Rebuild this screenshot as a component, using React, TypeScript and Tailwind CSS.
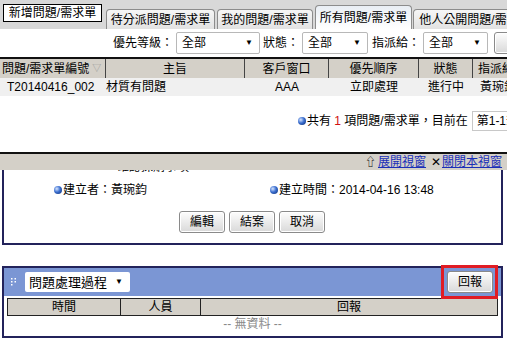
import React from "react";

const Bullet = () => (
  <span className="inline-block w-[8px] h-[8px] rounded-full bg-[radial-gradient(circle_at_35%_35%,#d8e6ff_0%,#3b6fd0_45%,#0b2a6e_100%)] mr-[1px]" />
);

const Select = ({ label, className }: { label: string; className: string }) => (
  <div className={"h-[22px] flex items-center justify-between bg-white border border-[#b8b8b8] rounded-[2px] pl-[5px] pr-[6px] " + className}>
    <span>{label}</span>
    <span className="text-[8px] leading-none">▼</span>
  </div>
);

const Btn = ({ label, className }: { label: string; className: string }) => (
  <div className={"h-[22px] flex items-center justify-center rounded-[3px] border border-[#8a8a8a] bg-linear-to-b from-[#fdfdfd] to-[#d9d9d9] shadow-[inset_0_0_0_1px_#fff] " + className}>
    {label}
  </div>
);

export default function App() {
  return (
    <div className="w-[507px] h-[339px] overflow-hidden bg-white text-[12px] leading-none text-black font-['Liberation_Sans','Noto_Sans_CJK_TC',sans-serif]">
      <div className="w-[640px]">
        {/* tabs */}
        <div className="h-[29px] bg-[#d8d8d8] flex items-end pl-[3px]">
          <div className="self-start mt-[4px] w-[99px] h-[18px] border border-black bg-white flex items-center justify-center">新增問題/需求單</div>
          <div className="ml-[4px] w-[109px] h-[20px] rounded-t-[4px] border border-b-0 border-[#8c8c8c] bg-linear-to-b from-[#f6f6f6] to-[#e2e2e2] flex items-center justify-center">待分派問題/需求單</div>
          <div className="ml-[2px] w-[96px] h-[20px] rounded-t-[4px] border border-b-0 border-[#8c8c8c] bg-linear-to-b from-[#f6f6f6] to-[#e2e2e2] flex items-center justify-center">我的問題/需求單</div>
          <div className="ml-[2px] w-[97px] h-[24px] rounded-t-[4px] border border-b-0 border-[#8c8c8c] bg-linear-to-b from-[#e9eef4] to-white flex items-center justify-center">所有問題/需求單</div>
          <div className="ml-[1px] w-[124px] h-[20px] rounded-t-[4px] border border-b-0 border-[#8c8c8c] bg-linear-to-b from-[#f6f6f6] to-[#e2e2e2] flex items-center justify-center">他人公開問題/需求單</div>
        </div>

        {/* filters */}
        <div className="h-[28px] flex items-center pl-[113px]">
          <span className="w-[63px]">優先等級：</span>
          <Select label="全部" className="w-[84px]" />
          <span className="ml-[3px] w-[39px]">狀態：</span>
          <Select label="全部" className="w-[66px]" />
          <span className="ml-[4px] w-[51px]">指派給：</span>
          <Select label="全部" className="w-[65px]" />
          <Btn label="檢索" className="ml-[6px] w-[50px]" />
        </div>

        {/* table */}
        <div className="border-t-2 border-[#111]">
          <div className="h-[19px] flex bg-[#d4d0c8]">
            <div className="w-[106px] flex items-center pl-[2px] border-r border-[#444]">
              問題/需求單編號<span className="ml-[3px] text-[9px] text-[#999]">▽</span>
            </div>
            <div className="w-[139px] flex items-center justify-center border-r border-[#444]">主旨</div>
            <div className="w-[84px] flex items-center justify-center border-r border-[#444]">客戶窗口</div>
            <div className="w-[90px] flex items-center justify-center border-r border-[#444]">優先順序</div>
            <div className="w-[54px] flex items-center justify-center border-r border-[#444]">狀態</div>
            <div className="w-[80px] flex items-center pl-[5px]">指派給</div>
          </div>
          <div className="h-[18px] flex bg-[#f0f0f0]">
            <div className="w-[106px] flex items-center pl-[7px]">T20140416_002</div>
            <div className="w-[139px] flex items-center">材質有問題</div>
            <div className="w-[84px] flex items-center justify-center">AAA</div>
            <div className="w-[90px] flex items-center justify-center">立即處理</div>
            <div className="w-[54px] flex items-center justify-center">進行中</div>
            <div className="w-[80px] flex items-center pl-[7px]">黃琬鈞</div>
          </div>
        </div>

        {/* pagination */}
        <div className="mt-[14px] h-[22px] flex items-center pl-[298px]">
          <Bullet />
          <span>共有 <span className="text-[#d01010]">1</span> 項問題/需求單，目前在</span>
          <div className="ml-[4px] h-[20px] w-[70px] border border-[#c8c8c8] flex items-center pl-[4px]">第1-1筆</div>
        </div>

        {/* view bar */}
        <div className="mt-[20px] border-t-2 border-[#111] h-[18px] bg-[#d4d0c8] flex items-center pl-[365px]">
          <span className="text-[11px] mr-[2px]">⇧</span>
          <span className="text-[#1a2fb8] underline">展開視窗</span>
          <span className="ml-[5px] mr-[1px]">✕</span>
          <span className="text-[#1a2fb8] underline">關閉本視窗</span>
        </div>

        {/* detail panel */}
        <div className="ml-[2px] w-[501px] h-[75px] border-x-2 border-b-2 border-[#23235b] overflow-hidden">
          <div className="-mt-[9px] pl-[113px] h-[13px]">確認採購事項</div>
          <div className="mt-[10px] flex items-center">
            <div className="w-[266px] pl-[50px] flex items-center">
              <Bullet />
              建立者：黃琬鈞
            </div>
            <div className="flex items-center">
              <Bullet />
              建立時間：2014-04-16 13:48
            </div>
          </div>
          <div className="mt-[15px] flex pl-[175px] gap-[4px]">
            <Btn label="編輯" className="w-[46px]" />
            <Btn label="結案" className="w-[46px]" />
            <Btn label="取消" className="w-[46px]" />
          </div>
        </div>

        {/* process panel */}
        <div className="mt-[21px] ml-[2px] w-[501px] h-[72px] border-2 border-[#23235b]">
          <div className="h-[28px] bg-[#7b96d4] flex items-center pl-[7px] pr-[3px]">
            <svg width="6" height="8" viewBox="0 0 6 8" className="mr-[8px]">
              <rect x="0" y="0" width="1.5" height="1.5" fill="#fff" />
              <rect x="3.5" y="0" width="1.5" height="1.5" fill="#fff" />
              <rect x="0" y="3" width="1.5" height="1.5" fill="#fff" />
              <rect x="3.5" y="3" width="1.5" height="1.5" fill="#fff" />
              <rect x="0" y="6" width="1.5" height="1.5" fill="#fff" />
            </svg>
            <div className="w-[105px] h-[20px] bg-white rounded-[2px] flex items-center justify-between pl-[4px] pr-[7px] text-[13px]">
              <span>問題處理過程</span>
              <span className="text-[8px]">▼</span>
            </div>
            <div className="ml-auto border-[3px] border-[#e01c24] p-[3px] pr-[2px]">
              <Btn label="回報" className="w-[46px] h-[21px]" />
            </div>
          </div>
          <div className="mt-[2px] mx-[3px] flex h-[18px] bg-[#d4d0c8] border border-[#222]">
            <div className="w-[113px] flex items-center justify-center border-r border-[#222]">時間</div>
            <div className="w-[80px] flex items-center justify-center border-r border-[#222]">人員</div>
            <div className="flex-1 flex items-center justify-center">回報</div>
          </div>
          <div className="h-[16px] flex items-center justify-center text-[#888]">-- 無資料 --</div>
        </div>
      </div>
    </div>
  );
}
